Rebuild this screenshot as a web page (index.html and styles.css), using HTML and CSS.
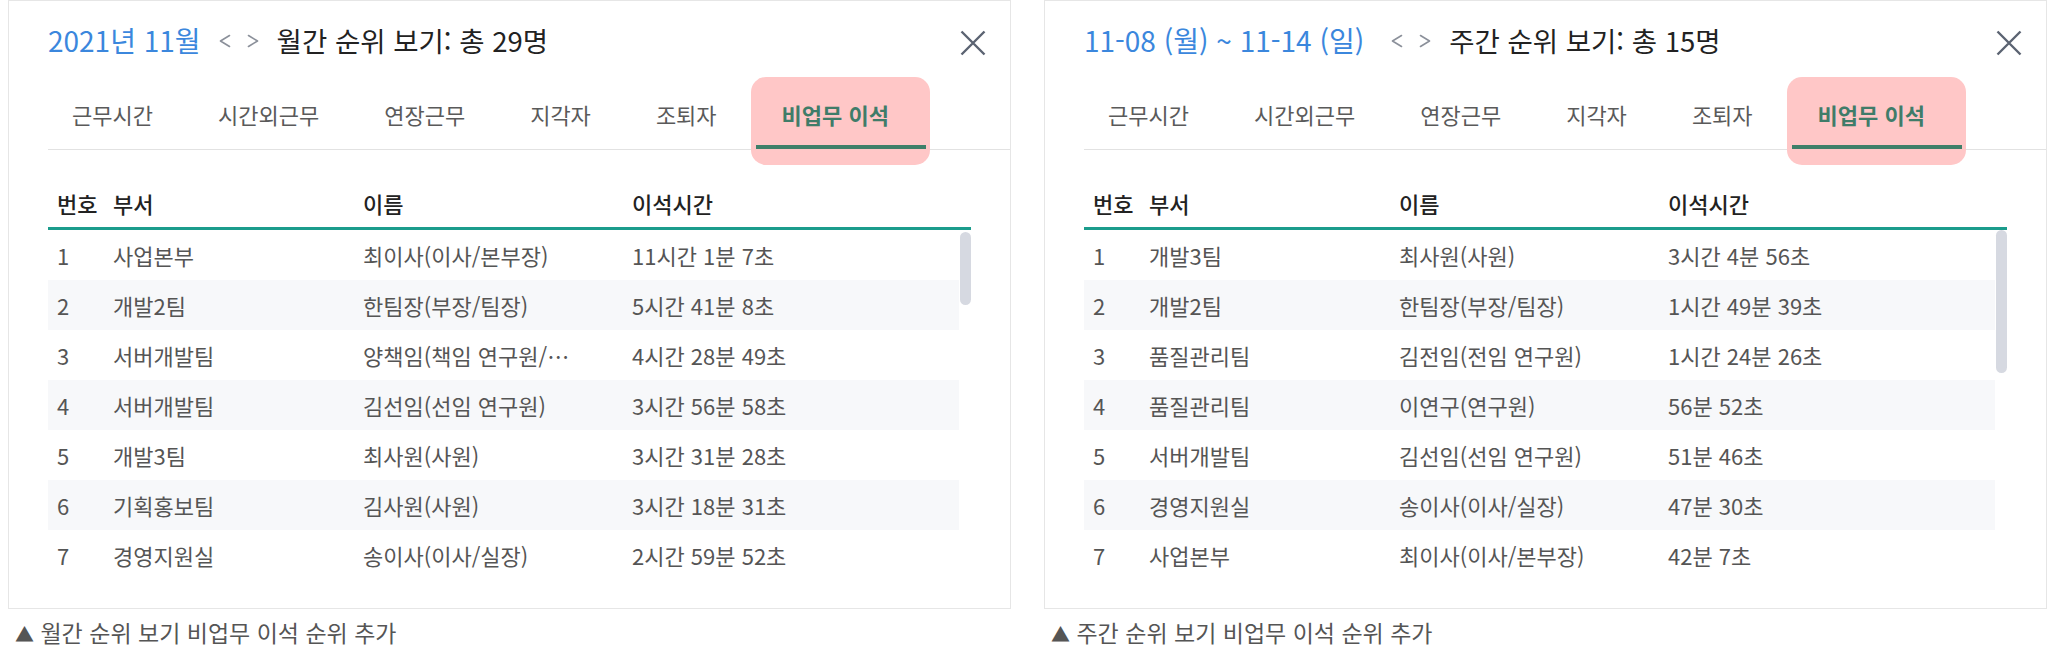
FILE: index.html
```html
<!DOCTYPE html>
<html lang="ko">
<head>
<meta charset="utf-8">
<title>순위 보기</title>
<link rel="stylesheet" href="styles.css">
</head>
<body>
<div class="page">
  <figure class="shot">
    <section class="card">
      <header class="card-head">
        <span class="period">2021년 11월</span>
        <span class="nav">
          <svg class="chev" viewBox="0 0 12 14"><polyline points="10.5,1.5 1.5,7 10.5,12.5"/></svg>
          <svg class="chev" viewBox="0 0 12 14"><polyline points="1.5,1.5 10.5,7 1.5,12.5"/></svg>
        </span>
        <h2 class="title">월간 순위 보기: 총 29명</h2>
        <svg class="close" viewBox="0 0 26 26"><path d="M1.5 1.5L24.5 24.5M24.5 1.5L1.5 24.5"/></svg>
      </header>
      <nav class="tabs">
        <span class="tab">근무시간</span>
        <span class="tab">시간외근무</span>
        <span class="tab">연장근무</span>
        <span class="tab">지각자</span>
        <span class="tab">조퇴자</span>
        <span class="tab active">비업무 이석</span>
      </nav>
      <div class="table">
        <div class="row head"><span>번호</span><span>부서</span><span>이름</span><span>이석시간</span></div>
        <div class="body">
          <div class="rows">
            <div class="row"><span>1</span><span>사업본부</span><span class="name">최이사(이사/본부장)</span><span>11시간 1분 7초</span></div>
            <div class="row alt"><span>2</span><span>개발2팀</span><span class="name">한팀장(부장/팀장)</span><span>5시간 41분 8초</span></div>
            <div class="row"><span>3</span><span>서버개발팀</span><span class="name">양책임(책임 연구원/팀장)</span><span>4시간 28분 49초</span></div>
            <div class="row alt"><span>4</span><span>서버개발팀</span><span class="name">김선임(선임 연구원)</span><span>3시간 56분 58초</span></div>
            <div class="row"><span>5</span><span>개발3팀</span><span class="name">최사원(사원)</span><span>3시간 31분 28초</span></div>
            <div class="row alt"><span>6</span><span>기획홍보팀</span><span class="name">김사원(사원)</span><span>3시간 18분 31초</span></div>
            <div class="row"><span>7</span><span>경영지원실</span><span class="name">송이사(이사/실장)</span><span>2시간 59분 52초</span></div>
          </div>
          <div class="track"><div class="thumb" style="margin-top:2px;height:73px"></div></div>
        </div>
      </div>
    </section>
    <figcaption class="caption"><span class="tri">▲</span> 월간 순위 보기 비업무 이석 순위 추가</figcaption>
  </figure>

  <figure class="shot">
    <section class="card">
      <header class="card-head">
        <span class="period period-range">11-08 (월) ~ 11-14 (일)</span>
        <span class="nav">
          <svg class="chev" viewBox="0 0 12 14"><polyline points="10.5,1.5 1.5,7 10.5,12.5"/></svg>
          <svg class="chev" viewBox="0 0 12 14"><polyline points="1.5,1.5 10.5,7 1.5,12.5"/></svg>
        </span>
        <h2 class="title">주간 순위 보기: 총 15명</h2>
        <svg class="close" viewBox="0 0 26 26"><path d="M1.5 1.5L24.5 24.5M24.5 1.5L1.5 24.5"/></svg>
      </header>
      <nav class="tabs">
        <span class="tab">근무시간</span>
        <span class="tab">시간외근무</span>
        <span class="tab">연장근무</span>
        <span class="tab">지각자</span>
        <span class="tab">조퇴자</span>
        <span class="tab active">비업무 이석</span>
      </nav>
      <div class="table">
        <div class="row head"><span>번호</span><span>부서</span><span>이름</span><span>이석시간</span></div>
        <div class="body">
          <div class="rows">
            <div class="row"><span>1</span><span>개발3팀</span><span class="name">최사원(사원)</span><span>3시간 4분 56초</span></div>
            <div class="row alt"><span>2</span><span>개발2팀</span><span class="name">한팀장(부장/팀장)</span><span>1시간 49분 39초</span></div>
            <div class="row"><span>3</span><span>품질관리팀</span><span class="name">김전임(전임 연구원)</span><span>1시간 24분 26초</span></div>
            <div class="row alt"><span>4</span><span>품질관리팀</span><span class="name">이연구(연구원)</span><span>56분 52초</span></div>
            <div class="row"><span>5</span><span>서버개발팀</span><span class="name">김선임(선임 연구원)</span><span>51분 46초</span></div>
            <div class="row alt"><span>6</span><span>경영지원실</span><span class="name">송이사(이사/실장)</span><span>47분 30초</span></div>
            <div class="row"><span>7</span><span>사업본부</span><span class="name">최이사(이사/본부장)</span><span>42분 7초</span></div>
          </div>
          <div class="track"><div class="thumb" style="margin-top:0;height:143px"></div></div>
        </div>
      </div>
    </section>
    <figcaption class="caption"><span class="tri">▲</span> 주간 순위 보기 비업무 이석 순위 추가</figcaption>
  </figure>
</div>
</body>
</html>
```

FILE: styles.css
```css
* { box-sizing: border-box; }

html, body {
  margin: 0;
  padding: 0;
  background: #ffffff;
}

body {
  font-family: "Noto Sans CJK KR", "Noto Sans", sans-serif;
  color: #555;
}

.page {
  display: flex;
  gap: 33px;
  padding: 0 1px 0 8px;
}

.shot {
  flex: 1 1 0;
  min-width: 0;
  margin: 0;
  display: flex;
  flex-direction: column;
}

.card {
  border: 1px solid #e6e6e6;
  height: 609px;
  background: #fff;
}

/* title row */
.card-head {
  height: 88px;
  display: flex;
  align-items: center;
  padding: 0 24px 10px 39px;
  font-size: 28px;
}

.period {
  color: #3b87dd;
  white-space: nowrap;
  margin-right: 18px;
}

.period-range {
  margin-right: 27px;
}

.nav {
  display: flex;
  gap: 16px;
  align-items: center;
  margin-top: 2px;
  margin-right: 18px;
}

.chev {
  width: 12px;
  height: 14px;
  fill: none;
  stroke: #8b909a;
  stroke-width: 1.6;
  stroke-linecap: round;
  stroke-linejoin: round;
}

.title {
  margin: 0;
  font-size: 27.5px;
  font-weight: 400;
  color: #222;
  white-space: nowrap;
}

.close {
  margin-left: auto;
  margin-top: 6px;
  width: 26px;
  height: 26px;
  fill: none;
  stroke: #5b6372;
  stroke-width: 2.4;
}

/* tabs */
.tabs {
  display: flex;
  gap: 23px;
  margin-left: 39px;
  padding-left: 3px;
  height: 61px;
  border-bottom: 1px solid #e2e2e2;
}

.tab {
  height: 60px;
  display: flex;
  align-items: center;
  padding: 0 21px 10px;
  font-size: 22px;
  color: #5a5a5a;
  white-space: nowrap;
}

.tab.active {
  position: relative;
  z-index: 0;
  padding-right: 40px;
  color: #3f7c69;
  font-weight: 700;
}

.tab.active::before {
  content: "";
  position: absolute;
  left: -10px;
  right: -1px;
  top: -12px;
  bottom: -16px;
  border-radius: 15px;
  background: #ffc7c7;
  z-index: -1;
}

.tab.active::after {
  content: "";
  position: absolute;
  left: -5px;
  right: 3px;
  bottom: 0;
  height: 4px;
  background: #3f7f69;
}

/* table */
.table {
  margin: 28px 39px 0;
}

.row {
  display: grid;
  grid-template-columns: 56px 250px 269px 1fr;
  align-items: center;
  height: 50px;
  padding-left: 9px;
  font-size: 22px;
  color: #555;
  white-space: nowrap;
}

.row.head {
  box-sizing: content-box;
  height: 49px;
  border-bottom: 3px solid #1b9c8c;
  color: #222;
  font-weight: 500;
}

.row.alt {
  background: #f7f8fa;
}

.name {
  overflow: hidden;
  text-overflow: ellipsis;
  padding-right: 43px;
}

.body {
  display: flex;
}

.rows {
  flex: 1 1 auto;
  min-width: 0;
}

.track {
  width: 12px;
  flex: 0 0 12px;
}

.thumb {
  width: 11px;
  margin-left: 1px;
  border-radius: 6px;
  background: #d6d9e1;
}

.caption {
  margin: 10px 0 0 7px;
  font-size: 23px;
  line-height: 26px;
  color: #555;
}

.tri {
  font-size: 19px;
  color: #555;
}
```
